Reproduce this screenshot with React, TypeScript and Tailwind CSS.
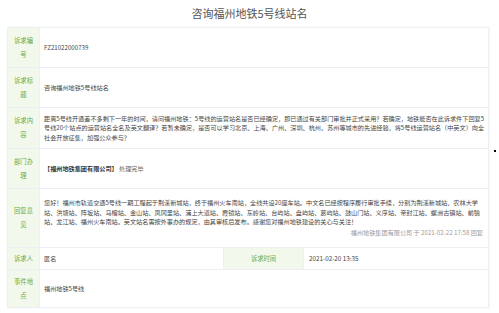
import React from 'react'

const font = { fontFamily: '"Noto Sans CJK SC", "Noto Sans", sans-serif' }

function Label({ children, className = '' }: { children: React.ReactNode; className?: string }) {
  return (
    <div
      className={`w-[32px] shrink-0 bg-[#f2f9ec] text-[#6aa83c] text-[6.3px] leading-[14px] text-center px-[6px] flex items-center justify-center border-r border-[#eceff3] ${className}`}
    >
      <span>{children}</span>
    </div>
  )
}

function Row({ label, h, children }: { label: string; h: string; children: React.ReactNode }) {
  return (
    <div className={`flex border-b border-[#eceff3] ${h}`}>
      <Label>{label}</Label>
      <div className="flex-1 flex items-center pl-[4px] pr-[2px] text-[6.15px] leading-[9.3px] text-[#444]">{children}</div>
    </div>
  )
}

export default function App() {
  return (
    <div className="w-[499px] h-[313px] bg-white relative overflow-hidden" style={font}>
      <div className="h-[27px] flex items-center justify-center text-[11px] text-[#555]">咨询福州地铁5号线站名</div>

      <div className="ml-[7px] w-[482px] border border-[#eceff3] border-b-0 shadow-[1px_0_3px_rgba(0,0,0,0.04)]">
        <Row label="诉求编号" h="h-[40px]">FZ21022000739</Row>
        <Row label="诉求标题" h="h-[40px]">咨询福州地铁5号线站名</Row>
        <Row label="诉求内容" h="h-[41px]">
          <p>
            距离5号线开通差不多剩下一年的时间，请问福州地铁：5号线的运营站名是否已经确定，即已通过有关部门审批并正式采用？若确定，地铁能否在此诉求件下回复5号线20个站点的运营站名全名及英文翻译？若暂未确定，是否可以学习北京、上海、广州、深圳、杭州、苏州等城市的先进经验，将5号线运营站名（中英文）向全社会开放征集，加强公众参与？
          </p>
        </Row>
        <Row label="部门办理" h="h-[40px]">
          <p>
            <span className="font-bold text-[#333]">【福州地铁集团有限公司】</span>
            <span className="text-[#666]"> 处理完毕</span>
          </p>
        </Row>
        <Row label="回复意见" h="h-[59px]">
          <div className="w-full">
            <p>
              您好！福州市轨道交通5号线一期工程起于荆溪新城站，终于福州火车南站，全线共设20座车站。中文名已经按程序履行审批手续，分别为荆溪新城站、农林大学站、洪塘站、阵坂站、马榕站、金山站、凤冈里站、浦上大道站、霞镜站、东岭站、台屿站、盘屿站、葛屿站、鼓山门站、义序站、帝封江站、螺洲古镇站、前锦站、龙江站、福州火车南站。英文站名需按外事办的规定，由其审核后发布。感谢您对福州地铁建设的关心与关注！
            </p>
            <p className="text-right text-[#999] mt-[2px] pr-[3px]">福州地铁集团有限公司 于 2021-02-22 17:58 回复</p>
          </div>
        </Row>
        <div className="flex border-b border-[#eceff3] h-[22px]">
          <Label>诉求人</Label>
          <div className="w-[184px] flex items-center pl-[4px] text-[6.15px] text-[#444] border-r border-[#eceff3]">匿名</div>
          <div className="w-[80px] bg-[#f2f9ec] text-[#6aa83c] text-[6.3px] flex items-center justify-center border-r border-[#eceff3]">
            诉求时间
          </div>
          <div className="flex-1 flex items-center px-[5px] text-[6.3px] text-[#444]">2021-02-20 13:35</div>
        </div>
        <Row label="事件地点" h="h-[38px]">福州地铁5号线</Row>
      </div>

      <div className="absolute left-[494px] top-[150px] w-[2px] h-[2px] bg-black" />
    </div>
  )
}
